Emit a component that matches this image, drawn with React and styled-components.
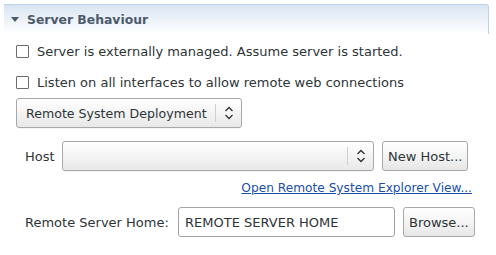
import React from 'react';
import styled, { createGlobalStyle } from 'styled-components';

const GlobalStyle = createGlobalStyle`
  html, body {
    margin: 0;
    padding: 0;
    background: #ffffff;
  }
  body {
    font-family: 'DejaVu Sans', 'Liberation Sans', sans-serif;
    font-size: 13px;
    color: #2e3436;
  }
`;

const Page = styled.div`
  width: 496px;
  height: 255px;
  padding: 4px 4px 0 4px;
  box-sizing: border-box;
  overflow: hidden;
`;

const SectionHeader = styled.div`
  height: 29px;
  display: flex;
  align-items: center;
  gap: 8px;
  padding-left: 7px;
  border-top: 1px solid #bfd3e8;
  border-right: 1px solid #bfd3e8;
  border-top-right-radius: 3px;
  background: linear-gradient(to bottom, #d9e5f2 0%, #ffffff 100%);
  margin-right: 3px;
`;

const Title = styled.span`
  font-weight: bold;
  font-size: 12.4px;
  color: #4c5a6b;
`;

const Body = styled.div`
  display: flex;
  flex-direction: column;
  padding: 9px 0 0 12px;
`;

const CheckRow = styled.label`
  display: flex;
  align-items: center;
  gap: 8px;
  height: 14px;
  margin-top: ${({ first }) => (first ? '1px' : '17px')};
`;

const Box = styled.span`
  width: 11px;
  height: 11px;
  border: 1px solid #6b6b6b;
  border-radius: 1px;
  background: #fff;
  flex: none;
`;

const Combo = styled.div`
  display: flex;
  align-items: center;
  height: 30px;
  width: ${({ w }) => w}px;
  box-sizing: border-box;
  border: 1px solid #a8a8a8;
  border-radius: 3px;
  background: linear-gradient(to bottom, #ffffff 0%, #f4f4f4 50%, #e8e8e8 100%);
  box-shadow: 0 1px 0 rgba(0, 0, 0, 0.04);
  flex: none;
`;

const ComboText = styled.span`
  flex: 1;
  padding-left: 9px;
  font-size: 12.6px;
  white-space: nowrap;
`;

const ComboArrow = styled.span`
  display: flex;
  align-items: center;
  justify-content: center;
  width: 25px;
  height: 18px;
  border-left: 1px solid #d0d0d0;
`;

const DeployCombo = styled(Combo)`
  margin-top: 9px;
`;

const FormRow = styled.div`
  display: flex;
  align-items: center;
  padding-left: 9px;
  margin-top: ${({ mt }) => mt}px;
`;

const Label = styled.span`
  width: ${({ w }) => w}px;
  flex: none;
  white-space: nowrap;
`;

const Button = styled.button`
  height: 30px;
  box-sizing: border-box;
  margin-left: 8px;
  padding: 0 5px;
  font-family: inherit;
  font-size: 13px;
  color: #2e3436;
  border: 1px solid #a8a8a8;
  border-radius: 3px;
  background: linear-gradient(to bottom, #ffffff 0%, #f2f2f2 60%, #e6e6e6 100%);
  white-space: nowrap;
`;

const TextField = styled.div`
  width: 217px;
  height: 30px;
  box-sizing: border-box;
  border: 1px solid #a3a3a3;
  border-radius: 3px;
  background: #fff;
  display: flex;
  align-items: center;
  padding-left: 6px;
  flex: none;
`;

const LinkRow = styled.div`
  display: flex;
  justify-content: flex-end;
  width: 456px;
  margin-top: 10px;
`;

const Link = styled.a`
  color: #1a4fa8;
  font-size: 12.2px;
  text-decoration: underline;
  cursor: pointer;
`;

const Arrows = () => (
  <svg width="10" height="14" viewBox="0 0 10 14">
    <path d="M1.5 5 L5 1.5 L8.5 5 M1.5 9 L5 12.5 L8.5 9" fill="none" stroke="#2e3436" strokeWidth="1.3" />
  </svg>
);

const Twisty = () => (
  <svg width="8" height="6" viewBox="0 0 8 6">
    <path d="M0 0 H8 L4 5 Z" fill="#4c5a6b" />
  </svg>
);

const App = () => (
  <Page>
    <GlobalStyle />
    <SectionHeader>
      <Twisty />
      <Title>Server Behaviour</Title>
    </SectionHeader>
    <Body>
      <CheckRow first>
        <Box />
        Server is externally managed. Assume server is started.
      </CheckRow>
      <CheckRow>
        <Box />
        Listen on all interfaces to allow remote web connections
      </CheckRow>
      <DeployCombo w={226}>
        <ComboText>Remote System Deployment</ComboText>
        <ComboArrow>
          <Arrows />
        </ComboArrow>
      </DeployCombo>
      <FormRow mt={13}>
        <Label w={37}>Host</Label>
        <Combo w={312}>
          <ComboText />
          <ComboArrow>
            <Arrows />
          </ComboArrow>
        </Combo>
        <Button>New Host...</Button>
      </FormRow>
      <LinkRow>
        <Link>Open Remote System Explorer View...</Link>
      </LinkRow>
      <FormRow mt={12}>
        <Label w={153}>Remote Server Home:</Label>
        <TextField>REMOTE SERVER HOME</TextField>
        <Button>Browse...</Button>
      </FormRow>
    </Body>
  </Page>
);

export default App;
